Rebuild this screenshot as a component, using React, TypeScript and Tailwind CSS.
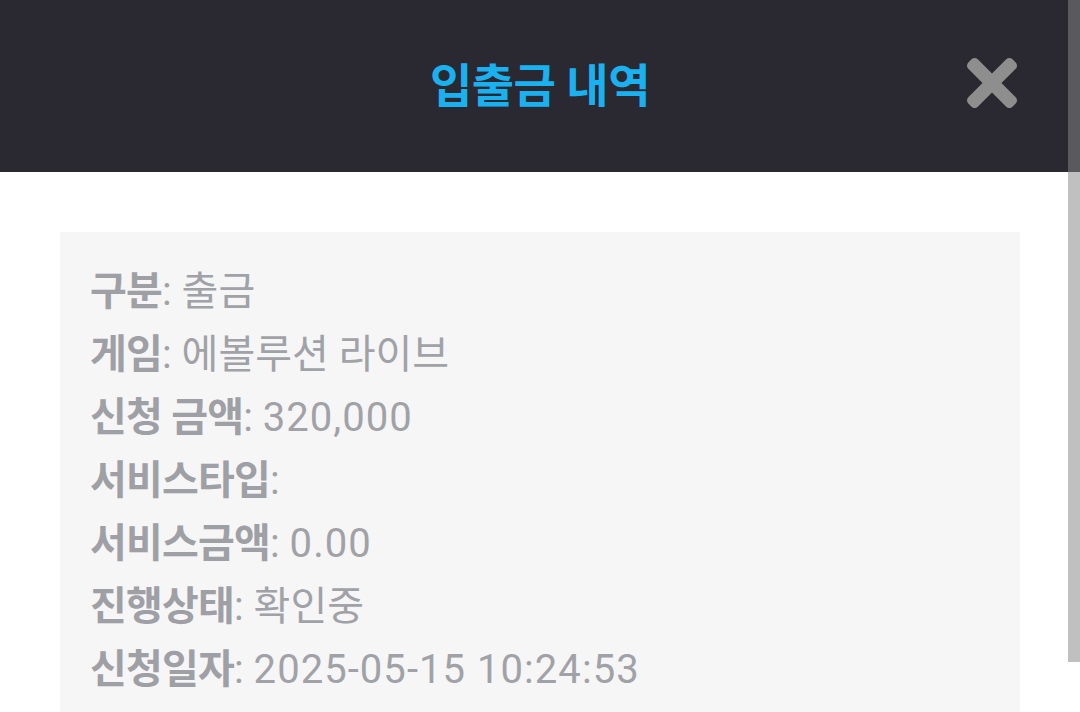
import React from 'react'

const rows: { label: string; value: string }[] = [
  { label: '구분', value: '출금' },
  { label: '게임', value: '에볼루션 라이브' },
  { label: '신청 금액', value: '320,000' },
  { label: '서비스타입', value: '' },
  { label: '서비스금액', value: '0.00' },
  { label: '진행상태', value: '확인중' },
  { label: '신청일자', value: '2025-05-15 10:24:53' },
]

function CloseIcon() {
  return (
    <svg viewBox="0 80 352 352" className="w-[50px] h-[50px]" fill="#8e8e8e">
      <path d="M242.72 256l100.07-100.07c12.28-12.28 12.28-32.19 0-44.48l-22.24-22.24c-12.28-12.28-32.19-12.28-44.48 0L176 189.28 75.930 89.21c-12.28-12.28-32.19-12.28-44.48 0L9.21 111.45c-12.280 12.28-12.28 32.19 0 44.48L109.28 256 9.21 356.07c-12.28 12.28-12.28 32.19 0 44.48l22.24 22.24c12.28 12.28 32.2 12.28 44.48 0L176 322.72l100.07 100.07c12.28 12.28 32.2 12.28 44.48 0l22.24-22.24c12.28-12.28 12.28-32.19 0-44.48L242.72 256z" />
    </svg>
  )
}

export default function App() {
  return (
    <div
      className="relative w-[1080px] h-[712px] overflow-hidden bg-white"
      style={{ fontFamily: "Roboto, 'Noto Sans CJK KR', sans-serif" }}
    >
      <header className="relative h-[172px] bg-[#2a2932] flex items-center justify-center">
        <h1 className="text-[46px] font-bold text-[#1ab1f0] leading-none tracking-[-0.5px]">입출금 내역</h1>
        <button className="absolute right-[63px] top-[58px] bg-transparent border-0 p-0">
          <CloseIcon />
        </button>
      </header>

      <div className="px-[60px] pt-[60px]">
        <div className="bg-[#f6f6f6] pl-[30px] pt-[28px] pb-[28px]">
          {rows.map((row) => (
            <div key={row.label} className="text-[40px] leading-[63px] text-[#a0a2a7] whitespace-nowrap">
              <span className="font-bold text-[#9ea0a5] tracking-[-0.8px]">{row.label}</span>:{' '}
              <span className={/^\d/.test(row.value) ? 'tracking-[1.05px]' : ''}>{row.value}</span>
            </div>
          ))}
        </div>
      </div>

      {/* overlay scrollbar */}
      <div className="absolute right-0 top-0 w-[12px] h-[662px] bg-[rgba(134,134,134,0.52)]" />
    </div>
  )
}
